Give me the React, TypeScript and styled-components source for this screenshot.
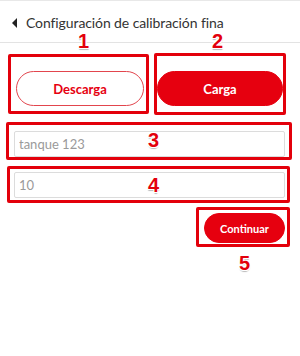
import React from 'react';
import styled, { createGlobalStyle } from 'styled-components';

const RED = '#e6000f';
const MARK = '#e3000b';

const GlobalStyle = createGlobalStyle`
  html, body {
    margin: 0;
    padding: 0;
    background: #fff;
  }
  body {
    font-family: Lato, "Open Sans", "Liberation Sans", sans-serif;
    color: #333;
  }
`;

const Page = styled.div`
  width: 300px;
  height: 356px;
  overflow: hidden;
  padding-top: 1px;
  box-sizing: border-box;
  border-top: 1px solid #e8e8e8;
`;

const Header = styled.div`
  height: 40px;
  display: flex;
  align-items: center;
  gap: 9px;
  padding-left: 12px;
  border-bottom: 1px solid #e3e3e3;
`;

const BackArrow = styled.span`
  width: 0;
  height: 0;
  border-top: 5px solid transparent;
  border-bottom: 5px solid transparent;
  border-right: 5px solid #222;
  margin-top: 1px;
`;

const Title = styled.h1`
  margin: 0;
  font-size: 14px;
  font-weight: 400;
  color: #333;
  letter-spacing: -0.1px;
`;

const ButtonRow = styled.div`
  display: grid;
  grid-template-columns: 128px 126px;
  column-gap: 13px;
  padding: 28px 17px 0 16px;
`;

const Pill = styled.button<{ $filled?: boolean }>`
  height: 35px;
  width: 100%;
  border-radius: 18px;
  border: 1px solid ${p => (p.$filled ? RED : '#e2454d')};
  background: ${p => (p.$filled ? RED : '#fff')};
  color: ${p => (p.$filled ? '#fff' : RED)};
  font-family: inherit;
  font-size: 13px;
  font-weight: 700;
  cursor: pointer;
`;

const Fields = styled.div`
  display: flex;
  flex-direction: column;
  gap: 15px;
  padding: 25px 15px 0 14px;
`;

const Field = styled.input`
  display: block;
  width: 100%;
  height: 26px;
  box-sizing: border-box;
  border: 1px solid #dcdcdc;
  border-radius: 2px;
  padding: 0 4px;
  font-family: inherit;
  font-size: 13px;
  color: #999;
  outline: none;
  &::placeholder {
    color: #9a9a9a;
  }
`;

const Actions = styled.div`
  display: flex;
  justify-content: flex-end;
  padding: 15px 15px 0 0;
`;

const SmallPill = styled(Pill)`
  width: 81px;
  height: 30px;
  border-radius: 15px;
  font-size: 11px;
`;

const Marked = styled.div`
  position: relative;
`;

const Frame = styled.span<{ $t: number; $r: number; $b: number; $l: number }>`
  position: absolute;
  top: ${p => p.$t}px;
  right: ${p => p.$r}px;
  bottom: ${p => p.$b}px;
  left: ${p => p.$l}px;
  border: 3px solid ${MARK};
  border-radius: 2px;
  pointer-events: none;
`;

const Badge = styled.span<{ $x: number; $y: number }>`
  position: absolute;
  left: ${p => p.$x}px;
  top: ${p => p.$y}px;
  font-family: "Liberation Sans", Arial, sans-serif;
  font-size: 20px;
  font-weight: 700;
  line-height: 20px;
  color: ${MARK};
  text-shadow: 1px 1px 0 #fff, -1px -1px 0 #fff, 1px -1px 0 #fff, -1px 1px 0 #fff,
    0 2px 1px #bbb;
  pointer-events: none;
`;

type Mark = { t: number; r: number; b: number; l: number; n: string; x: number; y: number };

const Annotated: React.FC<{ mark: Mark; children: React.ReactNode }> = ({ mark, children }) => (
  <Marked>
    {children}
    <Frame $t={mark.t} $r={mark.r} $b={mark.b} $l={mark.l} />
    <Badge $x={mark.x} $y={mark.y}>{mark.n}</Badge>
  </Marked>
);

export default function App() {
  return (
    <>
      <GlobalStyle />
      <Page>
        <Header>
          <BackArrow />
          <Title>Configuración de calibración fina</Title>
        </Header>

        <ButtonRow>
          <Annotated mark={{ t: -17, r: -5, b: -8, l: -8, n: '1', x: 62, y: -40 }}>
            <Pill>Descarga</Pill>
          </Annotated>
          <Annotated mark={{ t: -18, r: -3, b: -9, l: -3, n: '2', x: 55, y: -40 }}>
            <Pill $filled>Carga</Pill>
          </Annotated>
        </ButtonRow>

        <Fields>
          <Annotated mark={{ t: -9, r: -7, b: -3, l: -8, n: '3', x: 134, y: -1 }}>
            <Field placeholder="tanque 123" />
          </Annotated>
          <Annotated mark={{ t: -6, r: -5, b: -5, l: -7, n: '4', x: 134, y: 3 }}>
            <Field placeholder="10" />
          </Annotated>
        </Fields>

        <Actions>
          <Annotated mark={{ t: -6, r: -5, b: -4, l: -8, n: '5', x: 35, y: 40 }}>
            <SmallPill $filled>Continuar</SmallPill>
          </Annotated>
        </Actions>
      </Page>
    </>
  );
}
